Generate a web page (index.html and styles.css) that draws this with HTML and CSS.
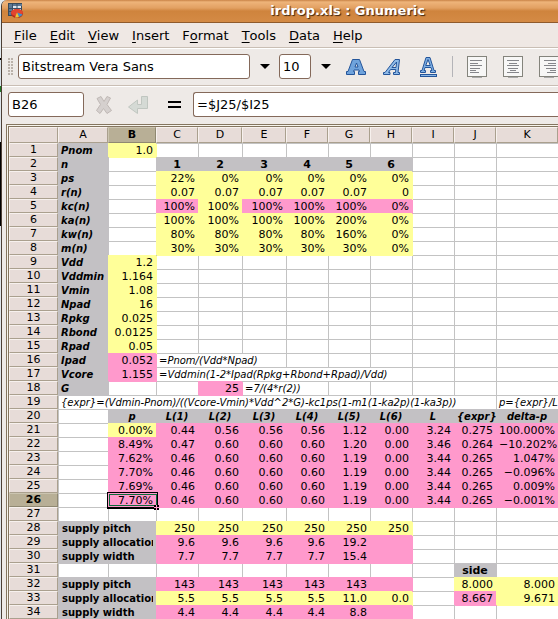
FILE: index.html
```html
<!DOCTYPE html>
<html lang="en">
<head>
<meta charset="utf-8">
<title>irdrop.xls : Gnumeric</title>
<link rel="stylesheet" href="styles.css">
</head>
<body>
<div class="window">
  <header class="titlebar">
    <svg class="app-icon" viewBox="0 0 16 16" aria-hidden="true">
      <rect x="0.5" y="0.5" width="13" height="12" fill="#dfe7ee" stroke="#3b4a58"/>
      <path d="M1 1h13v2H1zM1 1h3v11H1z" fill="#5b7895"/>
      <path d="M4.5 1v11M9 1v11M1 5.5h12M1 8.5h12" stroke="#3b5068" stroke-width="1"/>
      <ellipse cx="9" cy="10.500" rx="6" ry="4.500" fill="#b52d1d"/>
      <ellipse cx="9" cy="9.500" rx="6" ry="3.500" fill="#e2452f"/>
      <path d="M9 9.500L14.500 11.500A6 4 0 0 1 11 14z" fill="#3a8fd0"/>
      <path d="M9 9.500L11 14A6 4 0 0 1 7 14.500z" fill="#e6c83a"/>
    </svg>
    <h1>irdrop.xls : Gnumeric</h1>
  </header>

  <nav class="menubar" aria-label="Main menu">
    <button type="button"><u>F</u>ile</button>
    <button type="button"><u>E</u>dit</button>
    <button type="button"><u>V</u>iew</button>
    <button type="button"><u>I</u>nsert</button>
    <button type="button">F<u>o</u>rmat</button>
    <button type="button"><u>T</u>ools</button>
    <button type="button"><u>D</u>ata</button>
    <button type="button"><u>H</u>elp</button>
  </nav>

  <div class="toolbar" role="toolbar" aria-label="Format">
    <span class="grip"></span>
    <input class="field font-name" type="text" value="Bitstream Vera Sans" aria-label="Font">
    <button class="drop" type="button" aria-label="Choose font"></button>
    <input class="field font-size" type="text" value="10" aria-label="Font size">
    <button class="drop" type="button" aria-label="Choose font size"></button>
    <div class="styles">
      <button type="button" aria-label="Bold">
        <svg width="20" height="22" viewBox="0 0 20 22"><path fill-rule="evenodd" d="M0.5 18.500v-3h1.500L6.500 3.500h7L18 15.500h1.500v3h-7v-3h1l-.5-1.500H8l-.5 1.500h1v3zM9 11h3l-1.500-4z" fill="#6fa3dc" stroke="#24559a"/></svg>
      </button>
      <button type="button" aria-label="Italic">
        <svg width="20" height="22" viewBox="0 0 20 22"><path fill-rule="evenodd" d="M1.500 18.500v-2h1.500L13 3.500h4.500L16 16.500h1.500v2h-6v-2h2l.3-3H8.500l-2 3h1.500v2zM10 11.500h4l.6-5.500z" fill="#8fbbe8" stroke="#24559a"/></svg>
      </button>
      <button type="button" aria-label="Underline">
        <svg width="20" height="22" viewBox="0 0 20 22"><path fill-rule="evenodd" d="M2.500 16.500v-2H4L8 1.500h4l4 13h1.500v2h-5v-2H14l-1-3H7l-1 3h1.500v2zM7.700 9.500h4.600L10 3.500z" fill="#7fb0e4" stroke="#24559a"/><rect x="2.500" y="18.500" width="16" height="2" fill="#8ab8e8" stroke="#24559a"/></svg>
      </button>
    </div>
    <span class="sep"></span>
    <div class="aligns">
      <button type="button" aria-label="Align left">
        <svg width="20" height="22" viewBox="0 0 20 22"><rect x=".5" y=".5" width="19" height="20" fill="#f7f7f6" stroke="#84847c"/><path d="M5 21.500h10" stroke="#aaa"/><path d="M3 4.500h12M3 7.500h8M3 9.500h12M3 12.500h10M3 14.500h6M3 16.500h9" stroke="#85868a"/></svg>
      </button>
      <button type="button" aria-label="Align center">
        <svg width="20" height="22" viewBox="0 0 20 22"><rect x=".5" y=".5" width="19" height="20" fill="#f7f7f6" stroke="#84847c"/><path d="M5 21.500h10" stroke="#aaa"/><path d="M4 4.500h12M6 7.500h8M4 9.500h12M5 12.500h10M7 14.500h6M4 16.500h12" stroke="#85868a"/></svg>
      </button>
      <button type="button" aria-label="Align right">
        <svg width="20" height="22" viewBox="0 0 20 22"><rect x=".5" y=".5" width="19" height="20" fill="#f7f7f6" stroke="#84847c"/><path d="M5 21.500h10" stroke="#aaa"/><path d="M5 4.500h12M9 7.500h8M5 9.500h12M7 12.500h10M11 14.500h6M8 16.500h9" stroke="#85868a"/></svg>
      </button>
    </div>
  </div>

  <div class="formula-bar">
    <input class="field cell-name" type="text" value="B26" aria-label="Cell">
    <button type="button" aria-label="Cancel" disabled>
      <svg width="18" height="20" viewBox="0 0 18 20"><path d="M2 3.500L6 1.500l3 5 3-5 3.500 1.500-3.500 6.500 4.500 6-4.500 3-3.500-5-3.500 5L1.500 15.500l4-6z" fill="#d5d0ce" stroke="#bfb8b5"/></svg>
    </button>
    <button type="button" aria-label="Accept" disabled>
      <svg width="22" height="20" viewBox="0 0 22 20"><path d="M14.500 1.500h6v12h-10v5L1.500 12l9-7v4.500h4z" fill="#d5dad5" stroke="#c0c6c0"/></svg>
    </button>
    <button class="equals" type="button" aria-label="Enter formula">
      <svg width="13" height="8" viewBox="0 0 13 8"><path d="M0 1h13M0 6h13" stroke="#000" stroke-width="2"/></svg>
    </button>
    <input class="field formula" type="text" value="=$J25/$I25" aria-label="Formula">
  </div>

  <main class="sheet">
    <table>
      <colgroup>
        <col class="w-head"><col class="w-a"><col class="w-b"><col class="w-s"><col class="w-m"><col class="w-m">
        <col class="w-s"><col class="w-s"><col class="w-s"><col class="w-s"><col class="w-s"><col>
      </colgroup>
      <thead>
        <tr>
          <th></th><th scope="col">A</th><th scope="col" class="current">B</th><th scope="col">C</th>
          <th scope="col">D</th><th scope="col">E</th><th scope="col">F</th><th scope="col">G</th>
          <th scope="col">H</th><th scope="col">I</th><th scope="col">J</th><th scope="col">K</th>
        </tr>
      </thead>
      <tbody id="cells"></tbody>
    </table>
  </main>
</div>
<script src="sheet.js"></script>
</body>
</html>
```

FILE: styles.css
```css
* {
  box-sizing: border-box;
}

body {
  margin: 0;
  padding-left: 1px;
  background: linear-gradient(#e4ebf0 58px, #000 58px, #000 60px, #d8e2ea 60px, #d8e2ea 86px, #1d7a24 86px, #1d7a24 92px, #dfe6ec 92px, #dfe6ec 142px, #000 142px, #000 226px, #dfe6ec 226px);
  font-family: "DejaVu Sans", sans-serif;
  font-size: 13px;
  color: #000;
}

button {
  display: flex;
  align-items: center;
  justify-content: center;
  margin: 0;
  padding: 0;
  border: 0;
  background: none;
  font: inherit;
  color: inherit;
}

.window {
  border-left: 1px solid #4c3f35;
  border-top-left-radius: 6px;
  background: #eeeae7;
  overflow: hidden;
}

.titlebar {
  display: flex;
  align-items: center;
  height: 23px;
  padding-left: 6px;
  border-bottom: 1px solid #8f5a2c;
  background: linear-gradient(#c98347 0, #eeb47a 2px, #e2a062 8px, #cf843d 11px, #d48a45 22px);
}

.app-icon {
  width: 16px;
  height: 16px;
}

.titlebar h1 {
  margin: 0 133px 0 auto;
  font-size: 13px;
  line-height: 20px;
  white-space: nowrap;
  color: #fff;
  text-shadow: 1px 1px 1px #3d2410;
}

.menubar {
  display: flex;
  gap: 13px;
  height: 25px;
  padding-left: 12px;
  border-bottom: 1px solid #c9beb4;
  background: #efe8e4;
}

.menubar u {
  text-underline-offset: 2px;
}

.toolbar {
  display: flex;
  align-items: center;
  height: 38px;
  padding: 0 0 1px 6px;
  border-top: 1px solid #fff;
  border-bottom: 1px solid #c9beb4;
}

.toolbar > *,
.formula-bar > * {
  flex: none;
}

.grip {
  width: 5px;
  height: 18px;
  margin-right: 5px;
  background: radial-gradient(circle at 1px 1px, #bbb2aa 1px, transparent 1px) 0 0 / 3px 3px;
}

.field {
  height: 25px;
  padding: 0 3px;
  border: 1px solid #84695a;
  border-radius: 3px;
  background: #fff;
  font: inherit;
  color: inherit;
}

.font-name {
  width: 232px;
}

.font-size {
  width: 32px;
}

.drop {
  width: 29px;
  height: 24px;
}

.drop::before {
  content: "";
  border: 5px solid transparent;
  border-top-color: #000;
  border-bottom: 0;
}

.styles {
  display: flex;
  gap: 16px;
  margin-left: 6px;
}

.sep {
  width: 1px;
  height: 21px;
  margin: 0 14px;
  background: #b4b4b8;
}

.aligns {
  display: flex;
  gap: 16px;
}

.formula-bar {
  display: flex;
  align-items: center;
  height: 38px;
  padding: 0 0 2px 6px;
  border-top: 1px solid #fff;
}

.cell-name {
  width: 76px;
  margin-right: 11px;
}

.formula-bar button + button {
  margin-left: 14px;
}

.formula-bar .equals + .formula {
  flex: 1;
  min-width: 0;
  margin-left: 12px;
  border-right: 0;
  border-radius: 3px 0 0 3px;
}

.formula-bar .equals {
  margin-left: 19px;
}

.sheet {
  margin-left: 4px;
  border: solid #84755f;
  border-width: 1px 0 0 1px;
  padding: 1px 0 0 1px;
  background: #f7f5ee;
}

table {
  width: 100%;
  border-collapse: separate;
  border-spacing: 0;
  table-layout: fixed;
  border-top: 1px solid #84755f;
  border-left: 1px solid #84755f;
  background: #fff;
  font-size: 11px;
  line-height: 13px;
}

.w-head { width: 49px; }
.w-a { width: 50px; }
.w-b { width: 48px; }
.w-s { width: 42px; }
.w-m { width: 44px; }

th,
td {
  height: 14px;
  padding: 0 3px 0 2px;
  border: solid #c3c3c3;
  border-width: 1px 0 0 1px;
  text-align: right;
  white-space: nowrap;
}

th {
  padding: 0;
  border-color: #f7f1ee #aaa08e #aaa08e #f7f1ee;
  border-width: 1px;
  background: #e7dcd8;
  font-weight: normal;
  line-height: 12px;
  text-align: center;
}

thead th {
  height: 16px;
}

th.current {
  border-color: #cbc4b0 #8f8871 #8f8871 #cbc4b0;
  background: #b8af96;
  font-weight: bold;
}

.yellow,
.pink,
.label,
.heading,
.number,
.group {
  position: relative;
  border-color: transparent;
  box-shadow: 1px 1px 0 var(--fill);
  background: var(--fill);
}

.yellow { --fill: #ffff99; }
.pink { --fill: #ff99cc; }

.label,
.heading,
.number,
.group {
  --fill: #c3c1c4;
  font-weight: bold;
}

.label,
.heading,
.group,
.note {
  font-size: 10px;
}

.label,
.group,
.note {
  text-align: left;
}

.group {
  padding-left: 3px;
}

.heading,
.number {
  text-align: center;
}

.label,
.heading,
.note {
  font-style: italic;
}

.group span {
  display: block;
  overflow: hidden;
}

.selected {
  z-index: 1;
}

.cursor {
  position: absolute;
  inset: -2px;
  border: 1px solid #000;
  border-bottom-width: 2px;
}

.cursor::before {
  content: "";
  position: absolute;
  inset: 1px 0 1px 1px;
  border: 1px solid #0b6b3a;
}

.cursor::after {
  content: "";
  position: absolute;
  right: -2px;
  bottom: -3px;
  width: 5px;
  height: 5px;
  background: linear-gradient(#ff99cc, #ff99cc) 2px 0 / 1px 5px no-repeat, linear-gradient(#ff99cc, #ff99cc) 0 2px / 5px 1px no-repeat, #000;
}
```

FILE: sheet.js
```javascript
// Each row lists its cells from column A on, separated by "|".
// A cell is a kind letter, an optional column span, and its text.
const kinds = {
  w: "", y: "yellow", p: "pink", l: "label", h: "heading",
  n: "number", g: "group", f: "note"
};

const rows = [
  "l Pnom|y 1.0|w|w|w|w|w|w|w|w|w",
  "l n|w|n 1|n 2|n 3|n 4|n 5|n 6|w|w|w",
  "l ps|w|y 22%|y 0%|y 0%|y 0%|y 0%|y 0%|w|w|w",
  "l r(n)|w|y 0.07|y 0.07|y 0.07|y 0.07|y 0.07|y 0|w|w|w",
  "l kc(n)|w|p 100%|y 100%|p 100%|p 100%|p 100%|p 0%|w|w|w",
  "l ka(n)|w|y 100%|y 100%|y 100%|y 100%|y 200%|y 0%|w|w|w",
  "l kw(n)|w|y 80%|y 80%|y 80%|y 80%|y 160%|y 0%|w|w|w",
  "l m(n)|w|y 30%|y 30%|y 30%|y 30%|y 30%|y 0%|w|w|w",
  "l Vdd|y 1.2|w|w|w|w|w|w|w|w|w",
  "l Vddmin|y 1.164|w|w|w|w|w|w|w|w|w",
  "l Vmin|y 1.08|w|w|w|w|w|w|w|w|w",
  "l Npad|y 16|w|w|w|w|w|w|w|w|w",
  "l Rpkg|y 0.025|w|w|w|w|w|w|w|w|w",
  "l Rbond|y 0.0125|w|w|w|w|w|w|w|w|w",
  "l Rpad|y 0.05|w|w|w|w|w|w|w|w|w",
  "l Ipad|p 0.052|f3 =Pnom/(Vdd*Npad)|w|w|w|w|w|w",
  "l Vcore|p 1.155|f6 =Vddmin(1-2*Ipad(Rpkg+Rbond+Rpad)/Vdd)|w|w|w",
  "l G|w|w|p 25|f2 =7/(4*r(2))|w|w|w|w|w",
  "f10 {expr}=(Vdmin-Pnom)/((Vcore-Vmin)*Vdd^2*G)-kc1ps(1-m1(1-ka2p)(1-ka3p))|f p={expr}/L",
  "w|h p|h L(1)|h L(2)|h L(3)|h L(4)|h L(5)|h L(6)|h L|h {expr}|h delta-p",
  "w|y 0.00%|p 0.44|p 0.56|p 0.56|p 0.56|p 1.12|p 0.00|p 3.24|p 0.275|p 100.000%",
  "w|p 8.49%|p 0.47|p 0.60|p 0.60|p 0.60|p 1.20|p 0.00|p 3.46|p 0.264|p −10.202%",
  "w|p 7.62%|p 0.46|p 0.60|p 0.60|p 0.60|p 1.19|p 0.00|p 3.44|p 0.265|p 1.047%",
  "w|p 7.70%|p 0.46|p 0.60|p 0.60|p 0.60|p 1.19|p 0.00|p 3.44|p 0.265|p −0.096%",
  "w|p 7.69%|p 0.46|p 0.60|p 0.60|p 0.60|p 1.19|p 0.00|p 3.44|p 0.265|p 0.009%",
  "w|p 7.70%|p 0.46|p 0.60|p 0.60|p 0.60|p 1.19|p 0.00|p 3.44|p 0.265|p −0.001%",
  "w|w|w|w|w|w|w|w|w|w|w",
  "g2 supply pitch|y 250|y 250|y 250|y 250|y 250|y 250|w|w|w",
  "g2 supply allocation|p 9.6|p 9.6|p 9.6|p 9.6|p 19.2|p|w|w|w",
  "g2 supply width|p 7.7|p 7.7|p 7.7|p 7.7|p 15.4|p|w|w|w",
  "w|w|w|w|w|w|w|w|w|n side|w",
  "g2 supply pitch|p 143|p 143|p 143|p 143|p 143|p|w|y 8.000|y 8.000",
  "g2 supply allocation|y 5.5|y 5.5|y 5.5|y 5.5|y 11.0|y 0.0|w|p 8.667|y 9.671",
  "g2 supply width|p 4.4|p 4.4|p 4.4|p 4.4|p 8.8|p|w|w|w"
];

const selectedRow = 26;
const body = document.getElementById("cells");

rows.forEach((row, index) => {
  const tr = body.insertRow();
  const head = document.createElement("th");
  head.scope = "row";
  head.textContent = index + 1;
  if (index + 1 === selectedRow) head.className = "current";
  tr.append(head);

  row.split("|").forEach((cell, column) => {
    const [, kind, span, text] = cell.match(/^(\w)(\d*) ?(.*)$/);
    const td = tr.insertCell();
    td.className = kinds[kind];
    if (span) td.colSpan = Number(span);
    if (kind === "g") {
      const label = document.createElement("span");
      label.textContent = text;
      td.append(label);
    } else {
      td.textContent = text;
    }
    if (index + 1 === selectedRow && column === 1) {
      const cursor = document.createElement("div");
      cursor.className = "cursor";
      td.classList.add("selected");
      td.append(cursor);
    }
  });
});
```
